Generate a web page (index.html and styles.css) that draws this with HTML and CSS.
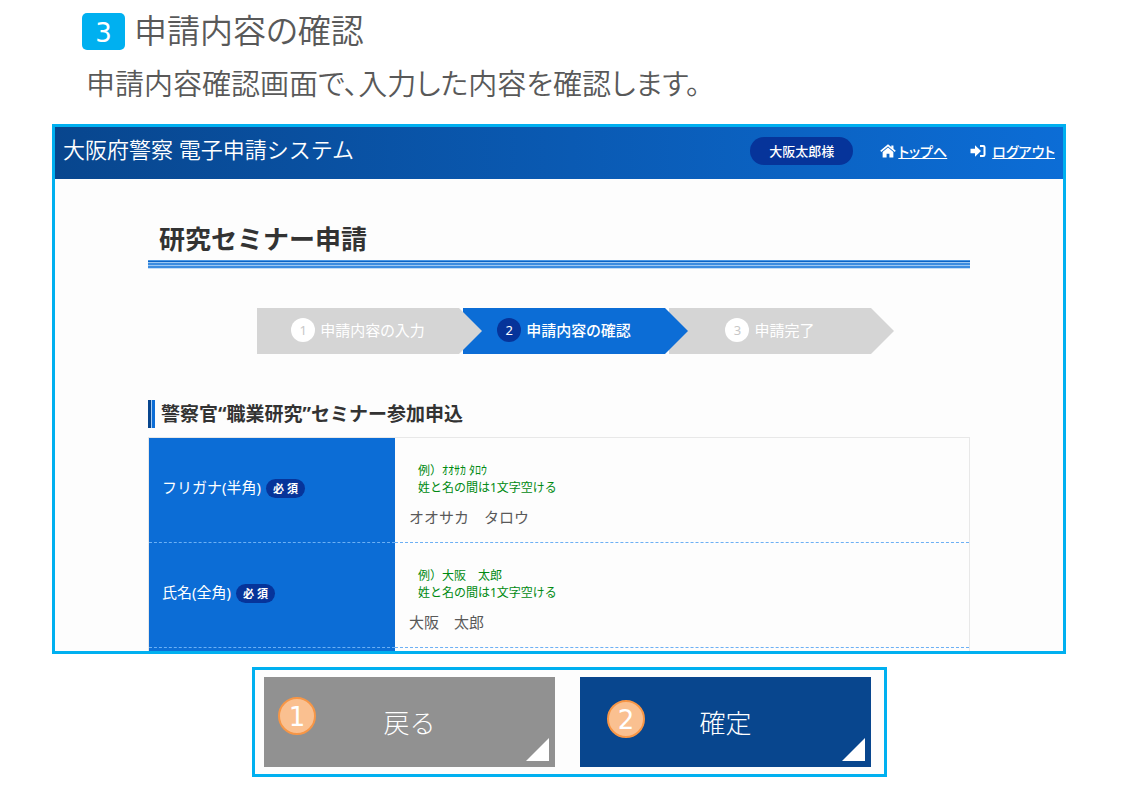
FILE: index.html
```html
<!DOCTYPE html>
<html lang="ja">

<head>
    <meta charset="UTF-8">
    <meta name="viewport" content="width=device-width, initial-scale=1.0">
    <title>申請内容の確認</title>
    <link rel="stylesheet" href="styles.css">
</head>

<body>
    <main class="page">
        <h1 class="guide-title"><span class="guide-number">3</span>申請内容の確認</h1>
        <p class="guide-text">申請内容確認画面で、入力した内容を確認します。</p>

        <section class="screen">
            <header class="site-header">
                <div class="site-name">大阪府警察 電子申請システム</div>
                <nav class="site-nav">
                    <span class="user">大阪太郎様</span>
                    <a class="nav-link" href="#">
                        <svg class="icon icon-home" viewBox="0 0 17 14" aria-hidden="true">
                            <path d="M0.8 7.4 L8.5 1 L16.2 7.4" fill="none" stroke="#fff" stroke-width="1.8" />
                            <path d="M12 1.2h2.3v4.2L12 3.6z" fill="#fff" />
                            <path d="M2.8 8 L8.5 3.4 L14.2 8 V14 H10 V9.8 H7 V14 H2.8z" fill="#fff" />
                        </svg><span class="link-text">トップへ</span>
                    </a>
                    <a class="nav-link" href="#">
                        <svg class="icon icon-logout" viewBox="0 0 16 14" aria-hidden="true">
                            <path d="M0.5 4.8h4.5V1.2L11 7L5 12.8V9.2H0.5z" fill="#fff" />
                            <path d="M10 2h3.2q1.3 0 1.3 1.3v7.4q0 1.3-1.3 1.3H10" fill="none" stroke="#fff" stroke-width="2" />
                        </svg><span class="link-text">ログアウト</span>
                    </a>
                </nav>
            </header>

            <div class="content">
                <h2 class="form-title">研究セミナー申請</h2>

                <ol class="steps">
                    <li class="step"><span class="step-number">1</span>申請内容の入力</li>
                    <li class="step current"><span class="step-number">2</span>申請内容の確認</li>
                    <li class="step"><span class="step-number">3</span>申請完了</li>
                </ol>

                <h3 class="section-title">警察官“職業研究”セミナー参加申込</h3>

                <table class="form-table">
                    <tr>
                        <th scope="row">フリガナ(半角)<span class="required">必 須</span></th>
                        <td>
                            <p class="hint">例）ｵｵｻｶ ﾀﾛｳ<br>姓と名の間は1文字空ける</p>
                            <p class="value">オオサカ　タロウ</p>
                        </td>
                    </tr>
                    <tr>
                        <th scope="row">氏名(全角)<span class="required">必 須</span></th>
                        <td>
                            <p class="hint">例）大阪　太郎<br>姓と名の間は1文字空ける</p>
                            <p class="value">大阪　太郎</p>
                        </td>
                    </tr>
                    <tr class="cut-row">
                        <th></th>
                        <td></td>
                    </tr>
                </table>
            </div>
        </section>

        <div class="actions">
            <button type="button" class="btn back"><span class="marker">1</span>戻る</button>
            <button type="button" class="btn submit"><span class="marker">2</span>確定</button>
        </div>
    </main>
</body>

</html>
```
FILE: styles.css
```css
* {
    box-sizing: border-box;
}

body {
    margin: 0;
    background: #fff;
    color: #595959;
    font-family: "Noto Sans", "Noto Sans CJK JP", sans-serif;
}

h1,
h2,
h3,
p,
ol {
    margin: 0;
    padding: 0;
}

.page {
    padding: 12px 58px 12px 52px;
}

/* guide heading */
.guide-title {
    display: flex;
    align-items: center;
    gap: 9px;
    padding-left: 30px;
    font-size: 33px;
    font-weight: 350;
    line-height: 38px;
    font-feature-settings: "palt";
}

.guide-number {
    width: 43px;
    height: 37px;
    border-radius: 5px;
    background: #00b0f0;
    color: #fff;
    font-family: "DejaVu Sans", sans-serif;
    font-size: 26px;
    font-weight: 400;
    line-height: 40px;
    text-align: center;
}

.guide-text {
    margin: 14px 0 20px;
    padding-left: 34px;
    font-size: 29px;
    font-weight: 350;
    line-height: 40px;
    font-feature-settings: "palt";
}

/* framed application screen */
.screen {
    border: 3px solid #00b0f0;
    background: #fdfdfd;
}

.site-header {
    display: flex;
    justify-content: space-between;
    align-items: center;
    height: 52px;
    padding: 0 8px;
    background: linear-gradient(to right, #08468e, #0c6dd6);
    color: #fff;
}

.site-name {
    padding-bottom: 8px;
    font-size: 22px;
    font-weight: 350;
    line-height: 32px;
}

.site-nav {
    display: flex;
    align-items: center;
    padding-bottom: 4px;
    font-size: 14px;
    font-weight: 500;
}

.user {
    padding: 0 19px;
    border-radius: 14px;
    background: #06349a;
    font-size: 13px;
    line-height: 28px;
}

.nav-link {
    display: flex;
    align-items: center;
    gap: 2px;
    margin-left: 27px;
    color: #fff;
    text-decoration: none;
}

.nav-link + .nav-link {
    gap: 6px;
    margin-left: 23px;
}

.link-text {
    text-decoration: underline;
    font-feature-settings: "palt";
}

.icon {
    width: 16px;
    height: 14px;
}

.content {
    padding: 41px 93px 0;
}

.form-title {
    padding: 0 11px;
    color: #333;
    font-size: 26px;
    line-height: 38px;
}

.form-title::after {
    content: "";
    display: block;
    height: 9px;
    margin: 2px -11px 0;
    background: linear-gradient(#4a97e4 0 1px, #0b62c4 1px 2px, #9cc8f2 2px 3px, #3c8ce0 3px 5px, #9cc8f2 5px 6px, #3c8ce0 6px 8px, #c4def7 8px);
}

/* progress steps */
.steps {
    display: flex;
    justify-content: center;
    gap: 4px;
    margin: 39px 0 46px;
    padding-left: 10px;
    list-style: none;
}

.step {
    position: relative;
    display: flex;
    justify-content: center;
    align-items: center;
    gap: 5px;
    width: 202px;
    height: 46px;
    padding-bottom: 3px;
    background: #d5d5d5;
    color: #fff;
    font-size: 15px;
    line-height: 20px;
    font-feature-settings: "palt";
}

.step::after {
    content: "";
    position: absolute;
    z-index: 1;
    left: 100%;
    top: 0;
    border-style: solid;
    border-width: 23px 0 23px 23px;
    border-color: transparent transparent transparent #d5d5d5;
}

.step-number {
    width: 24px;
    height: 24px;
    border-radius: 50%;
    background: #fff;
    color: #c8c8c8;
    font-size: 13px;
    line-height: 24px;
    text-align: center;
}

.current {
    background: #0c6dd6;
    font-weight: 500;
}

.current::after {
    border-left-color: #0c6dd6;
}

.current .step-number {
    background: #06349a;
    color: #fff;
    font-weight: 400;
}

.section-title {
    display: flex;
    align-items: center;
    gap: 6px;
    color: #333;
    font-size: 19px;
    line-height: 28px;
}

.section-title::before {
    content: "";
    width: 7px;
    height: 28px;
    background: linear-gradient(to right, #08468e 0 3px, #a9cdf2 3px 4px, #0c6dd6 4px);
}

/* application details */
.form-table {
    width: 100%;
    margin-top: 9px;
    border: 1px solid #e8e8e8;
    border-bottom: 0;
    border-spacing: 0;
}

.form-table th,
.form-table td {
    height: 105px;
    border-bottom: 1px dashed #6cb0f5;
    text-align: left;
}

.form-table th {
    width: 30%;
    padding: 0 13px 7px;
    background: #0c6dd6;
    color: #fff;
    font-size: 15px;
    font-weight: 400;
}

.form-table td {
    padding: 11px 14px 0;
    font-size: 15px;
}

.form-table .cut-row th,
.form-table .cut-row td {
    height: 3px;
    padding: 0;
    border: 0;
}

.required {
    display: inline-block;
    margin-left: 5px;
    padding: 0 7px;
    border-radius: 10px;
    background: #06349a;
    font-size: 11px;
    font-weight: 700;
    line-height: 19px;
}

.hint {
    padding-left: 9px;
    color: #008a12;
    font-size: 12px;
    line-height: 17px;
}

.value {
    margin-top: 9px;
    line-height: 24px;
}

/* buttons */
.actions {
    display: flex;
    gap: 25px;
    width: fit-content;
    margin: 13px 0 0 200px;
    padding: 7px 13px 7px 9px;
    border: 3px solid #00b0f0;
    background: #fdfdfd;
}

.btn {
    position: relative;
    width: 291px;
    height: 90px;
    border: 0;
    color: #fff;
    font-family: inherit;
    font-size: 26px;
    font-weight: 300;
}

.btn::after {
    content: "";
    position: absolute;
    right: 6px;
    bottom: 6px;
    border-style: solid;
    border-width: 0 0 23px 23px;
    border-color: transparent transparent #fff;
}

.back {
    background: #919191;
}

.submit {
    background: #08468e;
}

.marker {
    position: absolute;
    top: 20px;
    left: 14px;
    width: 38px;
    height: 38px;
    border: 2px solid #f79646;
    border-radius: 50%;
    background: #fac090;
    font-family: "DejaVu Sans", sans-serif;
    font-weight: 400;
    line-height: 36px;
}

.submit .marker {
    top: 23px;
    left: 27px;
}
```
